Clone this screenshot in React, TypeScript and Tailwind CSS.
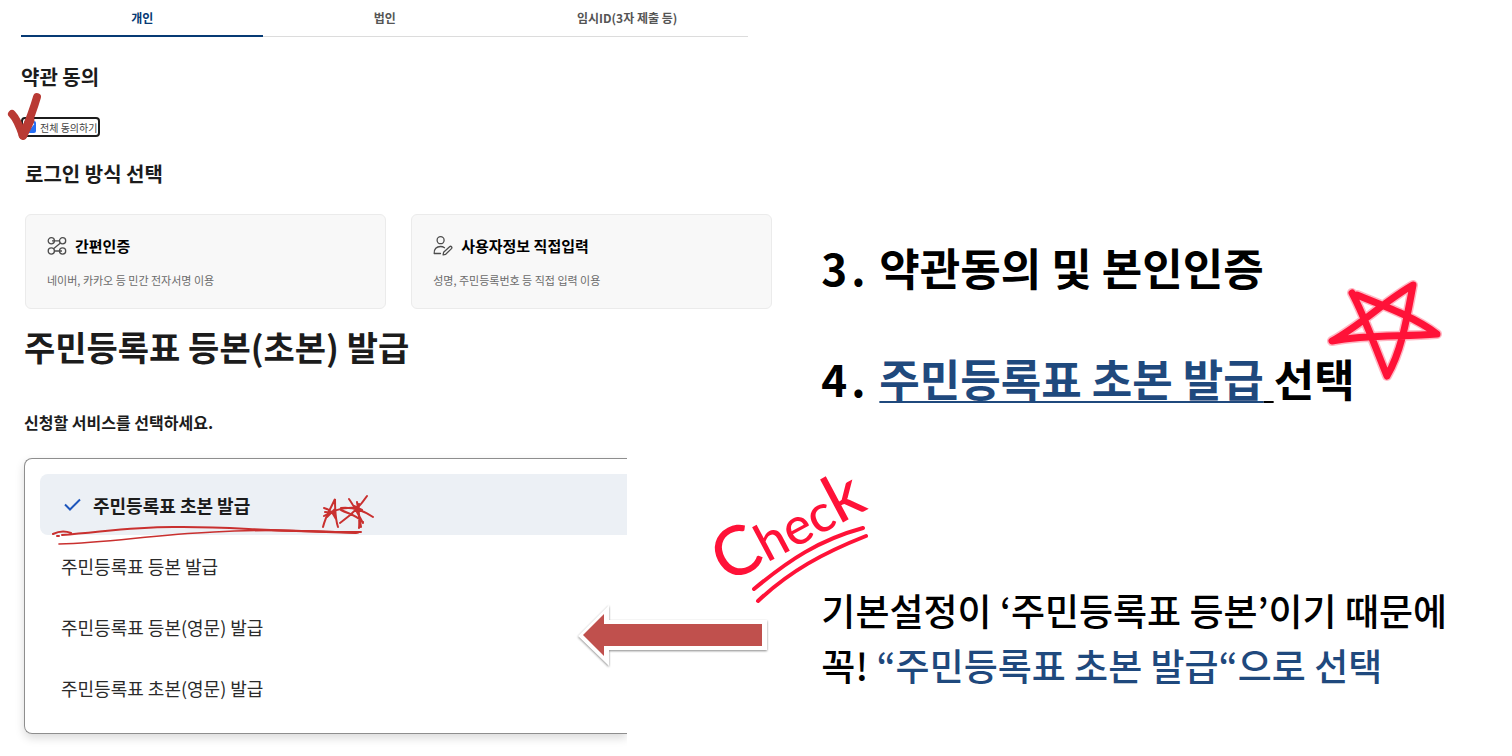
import React, { useState } from "react";

const tabs = ["개인", "법인", "임시ID(3자 제출 등)"];

const services = [
  "주민등록표 초본 발급",
  "주민등록표 등본 발급",
  "주민등록표 등본(영문) 발급",
  "주민등록표 초본(영문) 발급",
];

function NodesIcon() {
  return (
    <svg
      className="w-5 h-5"
      viewBox="0 0 20 20"
      fill="none"
      stroke="#4d4d4d"
      strokeWidth="1.3"
      aria-hidden="true"
    >
      <circle cx="4.3" cy="4.8" r="3.1" />
      <circle cx="15.6" cy="4.8" r="3.1" />
      <circle cx="4.3" cy="15" r="3.1" />
      <circle cx="15.6" cy="15" r="3.1" />
      <path d="M5 4.8h7.5M13.5 7.1 6.5 12.8M7.5 15H15" />
    </svg>
  );
}

function UserEditIcon() {
  return (
    <svg
      className="w-5 h-5"
      viewBox="0 0 20 20"
      fill="none"
      stroke="#4d4d4d"
      strokeWidth="1.3"
      strokeLinecap="round"
      strokeLinejoin="round"
      aria-hidden="true"
    >
      <circle cx="7.6" cy="4.2" r="3.5" />
      <path d="M7.5 17.5H1.2c-.4-4.6 2.4-7 6.3-7 1.6 0 2.9.4 4 1.2" />
      <path d="m10.6 16.3 6-5.6c1.4-1.1 3 .5 1.9 1.9l-5.8 5.7-2.6.6z" />
    </svg>
  );
}

function RedTick() {
  return (
    <svg
      className="absolute -left-4 -top-6 w-10 h-12 overflow-visible pointer-events-none"
      viewBox="0 0 40 48"
      fill="none"
      stroke="#b93a34"
      strokeLinecap="round"
      strokeLinejoin="round"
      aria-hidden="true"
    >
      <path d="M7 21c5 5 8 13 11 22 6-15 10-25 14-39" strokeWidth="8" />
      <path d="M18 42c3-6 5-10 7-15" strokeWidth="9" />
    </svg>
  );
}

function Scribble() {
  return (
    <svg
      className="absolute left-2 top-4 w-[330px] h-[60px] pointer-events-none"
      viewBox="0 0 330 60"
      fill="none"
      stroke="#c9302f"
      strokeLinecap="round"
      aria-hidden="true"
    >
      <path
        d="M5 44c6-3 13-3 18-1M14 45C55 42 80 37 125 37c60-1 90 5 188 5"
        strokeWidth="2"
      />
      <path d="M11 54c50-1 90-9 155-12 50-3 90-2 144 1" strokeWidth="1.7" />
      <path d="M9 46h2M218 40l90 3" strokeWidth="2" />
      <path
        d="M275 37c3-12 7-17 12-28 0 9 0 19 3 28M276 18c7 2 9 5 12 11M276 26c11-7 20-9 32-8M277 22l10 1M279 27l8-8"
        strokeWidth="2"
      />
      <path
        d="M301 9c5 7 9 15 14 24M319 6c-8 12-17 20-27 27M293 18c10-1 20 1 32 9M293 20c8 4 15 5 22 12M311 14c-1 8 1 16 0 24M309 12l4 25M306 16l8 4"
        strokeWidth="2"
      />
    </svg>
  );
}

function RedArrow() {
  return (
    <svg
      className="absolute right-[29px] top-[165px] w-[200px] h-[72px] pointer-events-none"
      viewBox="0 0 200 72"
      aria-hidden="true"
    >
      <g style={{ filter: "drop-shadow(0 1px 1px #00000077)" }}>
        <path d="M6 37 37 6v15h158v30H37v16z" fill="#fff" />
      </g>
      <path d="m11 36 21-21v10h158v22H32v10z" fill="#c0504d" />
    </svg>
  );
}

function RedStar() {
  return (
    <svg
      className="absolute -right-[91px] -top-[73px] w-[120px] h-[108px] pointer-events-none"
      viewBox="0 0 120 108"
      fill="none"
      stroke="#ff1238"
      strokeLinecap="round"
      strokeLinejoin="round"
      aria-hidden="true"
    >
      <path
        d="M26 16c12 22 23 54 35 83 14-24 19-53 26-91C60 23 35 48 6 64c36-7 70-4 105-7C90 41 61 30 31 18"
        strokeWidth="10"
        opacity=".3"
      />
      <path
        d="M26 16c12 22 23 54 35 83 14-24 19-53 26-91C60 23 35 48 6 64c36-7 70-4 105-7C90 41 61 30 31 18"
        strokeWidth="7"
      />
    </svg>
  );
}

function CheckMemo() {
  return (
    <svg
      className="absolute -left-[112px] -top-[114px] w-[170px] h-[140px] overflow-visible pointer-events-none"
      viewBox="0 0 170 140"
      fill="none"
      stroke="#ff1238"
      strokeLinecap="round"
    >
      <text
        x="18"
        y="115"
        transform="rotate(-28 18 115)"
        fill="#ff1238"
        stroke="none"
        fontFamily="Lato, sans-serif"
        fontSize="52"
      >
        <tspan fontSize="68">C</tspan>hec<tspan fontSize="66">k</tspan>
      </text>
      <path
        d="M45 120c35-29 65-49 109-61M49 132c32-30 65-48 108-65"
        strokeWidth="4"
      />
    </svg>
  );
}

function LoginCard({
  icon,
  title,
  desc,
}: {
  icon: React.ReactNode;
  title: string;
  desc: string;
}) {
  return (
    <button className="flex flex-col gap-3 px-[21px] pt-[19px] pb-[18px] text-left bg-[#f8f8f8] border border-[#ebebeb] rounded-md">
      <span className="flex items-center gap-2 text-[15px] leading-6 font-bold text-black">
        {icon}
        {title}
      </span>
      <span className="text-[11px] leading-5 text-[#6b6b6b]">{desc}</span>
    </button>
  );
}

function App() {
  const [tab, setTab] = useState(0);
  const [agree, setAgree] = useState(true);
  const [service, setService] = useState(0);

  return (
    <div className="flex min-h-screen overflow-hidden bg-white text-[#1c1c1c] font-['Noto_Sans_CJK_KR',sans-serif]">
      <div className="w-[53%] shrink-0">
        <nav className="grid grid-cols-3 ml-[21px] mr-[53px] border-b border-[#dcdcdc]">
          {tabs.map((name, i) => (
            <button
              key={name}
              onClick={() => setTab(i)}
              className={
                i === tab
                  ? "h-[37px] -mb-px border-b-2 border-[#063a74] text-xs font-bold text-[#063a74]"
                  : "h-[37px] -mb-px border-b-2 border-transparent text-xs font-bold text-[#555]"
              }
            >
              {name}
            </button>
          ))}
        </nav>

        <section className="pl-[21px] pt-6">
          <h2 className="text-xl leading-8 font-bold">약관 동의</h2>
          <div className="relative inline-block mt-6">
            <label className="flex items-center gap-1 h-5 px-px border-2 border-[#1c1c1c] rounded-sm text-[10px] text-[#444]">
              <input
                type="checkbox"
                checked={agree}
                onChange={(e) => setAgree(e.target.checked)}
                className="w-3 h-3 accent-[#256ef4]"
              />
              전체 동의하기
            </label>
            <RedTick />
          </div>
        </section>

        <section className="pl-[25px] pr-[29px] pt-5">
          <h2 className="text-xl leading-8 font-bold">로그인 방식 선택</h2>
          <div className="grid grid-cols-2 gap-[25px] mt-6">
            <LoginCard
              icon={<NodesIcon />}
              title="간편인증"
              desc="네이버, 카카오 등 민간 전자서명 이용"
            />
            <LoginCard
              icon={<UserEditIcon />}
              title="사용자정보 직접입력"
              desc="성명, 주민등록번호 등 직접 입력 이용"
            />
          </div>
        </section>

        <section>
          <h1 className="pl-6 pt-3 text-[34px] leading-[52px] font-bold">
            주민등록표 등본(초본) 발급
          </h1>
          <h3 className="pl-6 pt-[37px] text-base leading-6 font-bold">
            신청할 서비스를 선택하세요.
          </h3>
          <div className="relative">
            <div className="mr-[174px] pl-6 pt-6 pb-5 overflow-hidden">
              <ul className="p-[15px] pr-0 border border-r-0 border-[#8e8e8e] rounded-l-lg shadow-[0_4px_10px_#00000026]">
                {services.map((name, i) => (
                  <li key={name} className="relative">
                    <button
                      onClick={() => setService(i)}
                      className={
                        i === service
                          ? "flex items-center gap-3 w-full h-[61px] px-[21px] rounded-l-lg bg-[#ecf0f5] text-lg font-bold"
                          : "flex items-center gap-3 w-full h-[61px] px-[21px] text-lg text-[#2b2b2b]"
                      }
                    >
                      {i === service && (
                        <svg
                          className="w-5 h-5"
                          viewBox="0 0 20 20"
                          fill="none"
                          stroke="#1d56bc"
                          strokeWidth="2"
                          aria-hidden="true"
                        >
                          <path d="m4 9.5 5 5L19 4.5" />
                        </svg>
                      )}
                      {name}
                    </button>
                    {i === 0 && <Scribble />}
                  </li>
                ))}
              </ul>
            </div>
            <RedArrow />
          </div>
        </section>
      </div>

      <div className="pl-5 pt-[239px] text-black whitespace-nowrap">
        <ol className="flex flex-col items-start gap-[55px] text-[44px] leading-[56px] font-bold">
          <li className="flex">
            <span className="w-[58px]">
              3<span className="ml-1">.</span>
            </span>
            약관동의 및 본인인증
          </li>
          <li className="relative flex">
            <span className="w-[58px]">
              4<span className="ml-1">.</span>
            </span>
            <p>
              <a
                href="#"
                className="text-[#1f497d] underline decoration-2 underline-offset-4 [text-decoration-skip-ink:none]"
              >
                주민등록표 초본 발급
              </a>
              <span className="underline decoration-2 underline-offset-4">
                {" "}
              </span>
              선택
            </p>
            <RedStar />
          </li>
        </ol>
        <div className="relative mt-[177px] text-[37px] leading-[55px] font-medium">
          <p>기본설정이 ‘주민등록표 등본’이기 때문에</p>
          <p>
            꼭!{" "}
            <span className="text-[#1f497d]">
              “주민등록표 초본 발급“으로 선택
            </span>
          </p>
          <CheckMemo />
        </div>
      </div>
    </div>
  );
}

export default App;
